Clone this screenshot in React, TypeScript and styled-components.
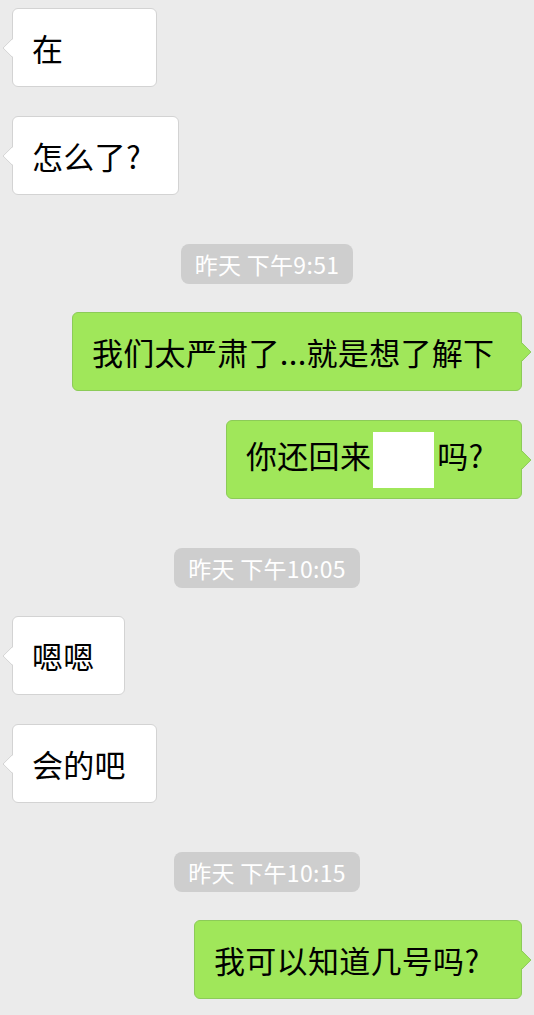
import React from "react";
import styled, { createGlobalStyle, css } from "styled-components";

const GlobalStyle = createGlobalStyle`
  html, body {
    margin: 0;
    padding: 0;
    background: #ebebeb;
  }
  body {
    font-family: "Noto Sans CJK SC", "Noto Sans", sans-serif;
  }
`;

const Chat = styled.div`
  display: flex;
  flex-direction: column;
  gap: 29px;
  padding: 8px 12px 0;
  min-height: 100vh;
  box-sizing: border-box;
  background: #ebebeb;
`;

const Row = styled.div<{ $mine?: boolean }>`
  display: flex;
  justify-content: ${(p) => (p.$mine ? "flex-end" : "flex-start")};
`;

const TimeRow = styled.div`
  display: flex;
  justify-content: center;
  margin: 20px 0 -1px;
`;

const Stamp = styled.span`
  display: inline-flex;
  align-items: center;
  height: 40px;
  padding: 0 14px;
  border-radius: 8px;
  background: #cecece;
  color: #ffffff;
  font-size: 23px;
  letter-spacing: 0.3px;
  white-space: pre;
`;

const Bubble = styled.div<{ $mine?: boolean; $w: number }>`
  position: relative;
  box-sizing: border-box;
  width: ${(p) => p.$w}px;
  height: 79px;
  display: flex;
  align-items: center;
  padding-left: 19px;
  border-radius: 6px;
  font-size: 31px;
  letter-spacing: 0.3px;
  color: #000;
  white-space: nowrap;
  background: ${(p) => (p.$mine ? "#a0e75a" : "#ffffff")};
  border: 1px solid ${(p) => (p.$mine ? "#8ccb58" : "#d3d3d3")};

  &::before {
    content: "";
    position: absolute;
    top: 50%;
    width: 14px;
    height: 14px;
    margin-top: -7px;
    box-sizing: border-box;
    background: inherit;
    border-radius: 2px;
    transform: rotate(45deg);
    ${(p) =>
      p.$mine
        ? css`
            right: -8px;
            border-top: 1px solid #8ccb58;
            border-right: 1px solid #8ccb58;
          `
        : css`
            left: -8px;
            border-left: 1px solid #d3d3d3;
            border-bottom: 1px solid #d3d3d3;
          `}
  }
`;

const Redact = styled.span`
  display: inline-block;
  width: 61px;
  height: 56px;
  margin: 0 3px 0 2px;
  background: #ffffff;
  vertical-align: middle;
`;

type Item =
  | { kind: "time"; text: string }
  | { kind: "msg"; mine: boolean; w: number; content: React.ReactNode };

const items: Item[] = [
  { kind: "msg", mine: false, w: 145, content: "在" },
  { kind: "msg", mine: false, w: 167, content: "怎么了?" },
  { kind: "time", text: "昨天 下午9:51" },
  { kind: "msg", mine: true, w: 450, content: "我们太严肃了...就是想了解下" },
  {
    kind: "msg",
    mine: true,
    w: 296,
    content: (
      <>
        你还回来
        <Redact />
        吗?
      </>
    ),
  },
  { kind: "time", text: "昨天 下午10:05" },
  { kind: "msg", mine: false, w: 113, content: "嗯嗯" },
  { kind: "msg", mine: false, w: 145, content: "会的吧" },
  { kind: "time", text: "昨天 下午10:15" },
  { kind: "msg", mine: true, w: 328, content: "我可以知道几号吗?" },
];

export default function App() {
  return (
    <>
      <GlobalStyle />
      <Chat>
        {items.map((it, i) =>
          it.kind === "time" ? (
            <TimeRow key={i}>
              <Stamp>{it.text}</Stamp>
            </TimeRow>
          ) : (
            <Row key={i} $mine={it.mine}>
              <Bubble $mine={it.mine} $w={it.w}>
                <span>{it.content}</span>
              </Bubble>
            </Row>
          )
        )}
      </Chat>
    </>
  );
}
